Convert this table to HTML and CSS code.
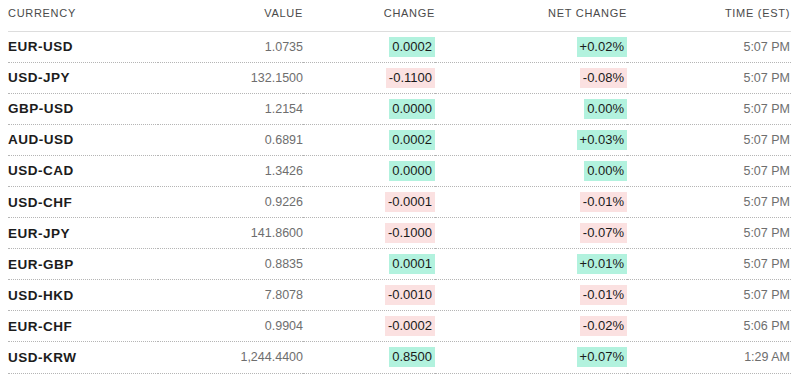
FILE: index.html
```html
<!DOCTYPE html>
<html lang="en">
<head>
    <meta charset="UTF-8">
    <meta name="viewport" content="width=device-width, initial-scale=1.0">
    <title>Currencies</title>
    <link rel="stylesheet" href="styles.css">
</head>
<body>
    <table class="quotes">
        <thead>
            <tr>
                <th class="col-name">Currency</th>
                <th class="col-value">Value</th>
                <th class="col-change">Change</th>
                <th class="col-net">Net Change</th>
                <th class="col-time">Time (EST)</th>
            </tr>
        </thead>
        <tbody>
            <tr>
                <td class="name">EUR-USD</td>
                <td class="value">1.0735</td>
                <td><span class="pill up">0.0002</span></td>
                <td><span class="pill up">+0.02%</span></td>
                <td class="time">5:07 PM</td>
            </tr>
            <tr>
                <td class="name">USD-JPY</td>
                <td class="value">132.1500</td>
                <td><span class="pill down">-0.1100</span></td>
                <td><span class="pill down">-0.08%</span></td>
                <td class="time">5:07 PM</td>
            </tr>
            <tr>
                <td class="name">GBP-USD</td>
                <td class="value">1.2154</td>
                <td><span class="pill up">0.0000</span></td>
                <td><span class="pill up">0.00%</span></td>
                <td class="time">5:07 PM</td>
            </tr>
            <tr>
                <td class="name">AUD-USD</td>
                <td class="value">0.6891</td>
                <td><span class="pill up">0.0002</span></td>
                <td><span class="pill up">+0.03%</span></td>
                <td class="time">5:07 PM</td>
            </tr>
            <tr>
                <td class="name">USD-CAD</td>
                <td class="value">1.3426</td>
                <td><span class="pill up">0.0000</span></td>
                <td><span class="pill up">0.00%</span></td>
                <td class="time">5:07 PM</td>
            </tr>
            <tr>
                <td class="name">USD-CHF</td>
                <td class="value">0.9226</td>
                <td><span class="pill down">-0.0001</span></td>
                <td><span class="pill down">-0.01%</span></td>
                <td class="time">5:07 PM</td>
            </tr>
            <tr>
                <td class="name">EUR-JPY</td>
                <td class="value">141.8600</td>
                <td><span class="pill down">-0.1000</span></td>
                <td><span class="pill down">-0.07%</span></td>
                <td class="time">5:07 PM</td>
            </tr>
            <tr>
                <td class="name">EUR-GBP</td>
                <td class="value">0.8835</td>
                <td><span class="pill up">0.0001</span></td>
                <td><span class="pill up">+0.01%</span></td>
                <td class="time">5:07 PM</td>
            </tr>
            <tr>
                <td class="name">USD-HKD</td>
                <td class="value">7.8078</td>
                <td><span class="pill down">-0.0010</span></td>
                <td><span class="pill down">-0.01%</span></td>
                <td class="time">5:07 PM</td>
            </tr>
            <tr>
                <td class="name">EUR-CHF</td>
                <td class="value">0.9904</td>
                <td><span class="pill down">-0.0002</span></td>
                <td><span class="pill down">-0.02%</span></td>
                <td class="time">5:06 PM</td>
            </tr>
            <tr>
                <td class="name">USD-KRW</td>
                <td class="value">1,244.4400</td>
                <td><span class="pill up">0.8500</span></td>
                <td><span class="pill up">+0.07%</span></td>
                <td class="time">1:29 AM</td>
            </tr>
        </tbody>
    </table>
</body>
</html>
```

FILE: styles.css
```css
/* Currency quotes table */
body {
    font-family: "Liberation Sans", Arial, sans-serif;
    background-color: #fff;
    margin: 0;
    padding: 0 8px;
}

.quotes {
    width: 783px;
    border-collapse: collapse;
    table-layout: fixed;
}

th, td {
    padding: 0;
    text-align: right;
}

th {
    height: 31px;
    font-size: 11px;
    font-weight: normal;
    letter-spacing: 0.7px;
    text-transform: uppercase;
    color: #4a4a4a;
    vertical-align: top;
    padding-top: 7px;
    box-sizing: border-box;
    border-bottom: 1px solid #ddd;
}

.col-name { width: 150px; text-align: left; }
.col-value { width: 145px; }
.col-change { width: 132px; }
.col-net { width: 192px; }
.col-time { width: 164px; padding-right: 1px; }

td {
    height: 30.1px;
    border-bottom: 1px dotted #b5b5b5;
    font-size: 13px;
    color: #1a1a1a;
}

.name {
    text-align: left;
    font-weight: bold;
    font-size: 13.5px;
    letter-spacing: 0.5px;
    color: #1c1c1c;
}

.value, .time {
    color: #6e6e6e;
    font-size: 12.5px;
}

.time {
    padding-right: 1px;
}

.pill {
    display: inline-block;
    padding: 2px 3px;
    line-height: 16px;
}

.up {
    background-color: #b2f2de;
}

.down {
    background-color: #fbe1e1;
}
```
